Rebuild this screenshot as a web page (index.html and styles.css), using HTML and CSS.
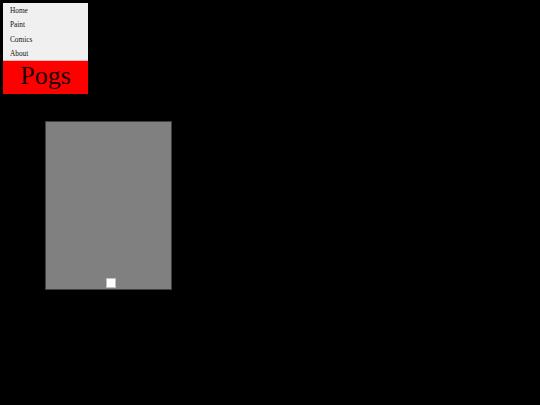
FILE: index.html
```html
<!DOCTYPE html>
<html>
<head>
<meta charset="utf-8">
<link rel="stylesheet" href="styles.css">
</head>
<body>
<div class="panel">
  <ul class="menu">
    <li>Home</li>
    <li>Paint</li>
    <li>Comics</li>
    <li>About</li>
  </ul>
  <div class="logo">Pogs</div>
</div>
<div class="canvas">
  <div class="knob"></div>
</div>
</body>
</html>
```
FILE: styles.css
```css
html, body {
  margin: 0;
  padding: 0;
  background: #000;
}
body {
  padding: 3px;
  font-family: "Liberation Serif", serif;
}
.panel {
  width: 85px;
  display: flex;
  flex-direction: column;
}
.menu {
  list-style: none;
  margin: 0;
  padding: 0;
  background: #f0f0f0;
  height: 57px;
  display: flex;
  flex-direction: column;
}
.menu li {
  flex: 1;
  display: flex;
  align-items: center;
  padding-left: 7px;
  padding-top: 1px;
  font-size: 7.3px;
  color: #111;
}
.logo {
  background: #ff0000;
  height: 34px;
  border-top: 1px solid #ffb0b0;
  box-sizing: border-box;
  display: flex;
  align-items: flex-start;
  justify-content: center;
  padding-top: 2px;
  font-size: 26px;
  line-height: 26px;
  color: #1a0000;
}
.canvas {
  margin: 27px 0 0 42px;
  width: 125px;
  height: 167px;
  background: #808080;
  border: 1px solid #404040;
  display: flex;
  justify-content: center;
  align-items: flex-end;
}
.knob {
  width: 8px;
  height: 8px;
  background: #fff;
  border: 0.5px solid #c0c0c0;
  margin: 0 0 1px 4px;
}
```
